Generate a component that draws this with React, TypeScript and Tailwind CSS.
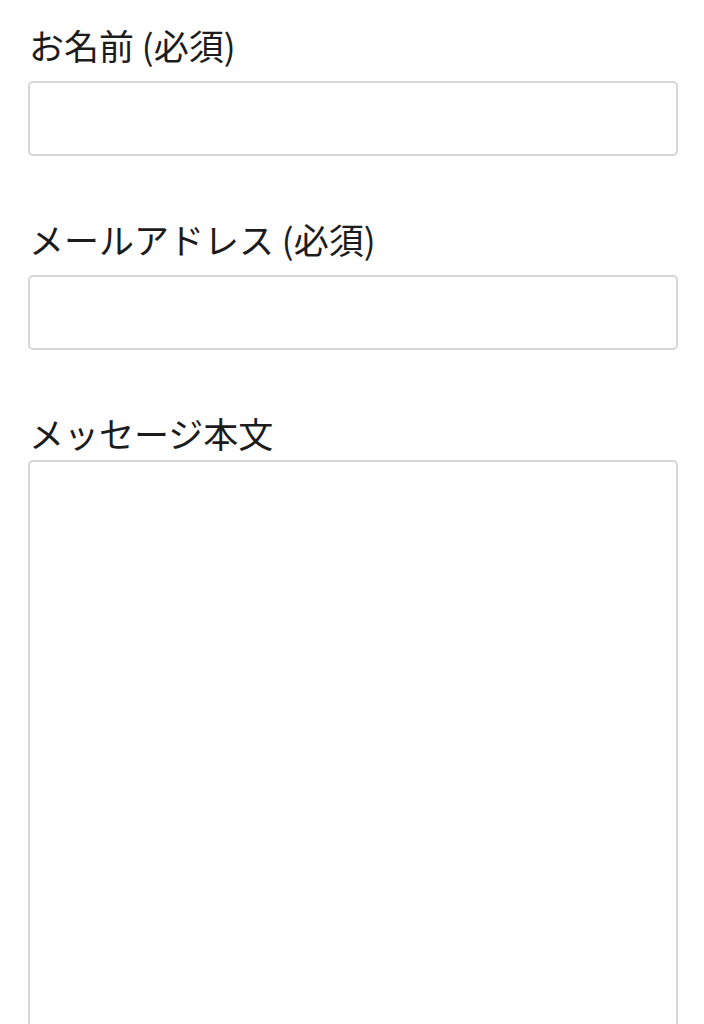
import React from "react";

export default function App() {
  const font = { fontFamily: '"Noto Sans CJK JP", "Noto Sans", sans-serif' };
  return (
    <div className="h-[1024px] overflow-hidden bg-white pl-[28px] pr-[26px] pt-[19px]" style={font}>
      <form className="flex flex-col">
        <label className="block text-[35px] leading-[52px] text-[#1c1c1c] pl-[1px]">お名前 (必須)</label>
        <input type="text" className="mt-[10px] block h-[75px] w-full rounded-[5px] border-2 border-[#d6d6d6] bg-white outline-none" />
        <label className="mt-[57px] block text-[35px] leading-[52px] text-[#1c1c1c] pl-[1px]">メールアドレス (必須)</label>
        <input type="email" className="mt-[10px] block h-[75px] w-full rounded-[5px] border-2 border-[#d6d6d6] bg-white outline-none" />
        <label className="mt-[57px] block text-[35px] leading-[52px] text-[#1c1c1c] pl-[1px]">メッセージ本文</label>
        <textarea className="mt-[1px] block h-[580px] w-full resize-none rounded-[5px] border-2 border-[#d6d6d6] bg-white outline-none" />
      </form>
    </div>
  );
}
